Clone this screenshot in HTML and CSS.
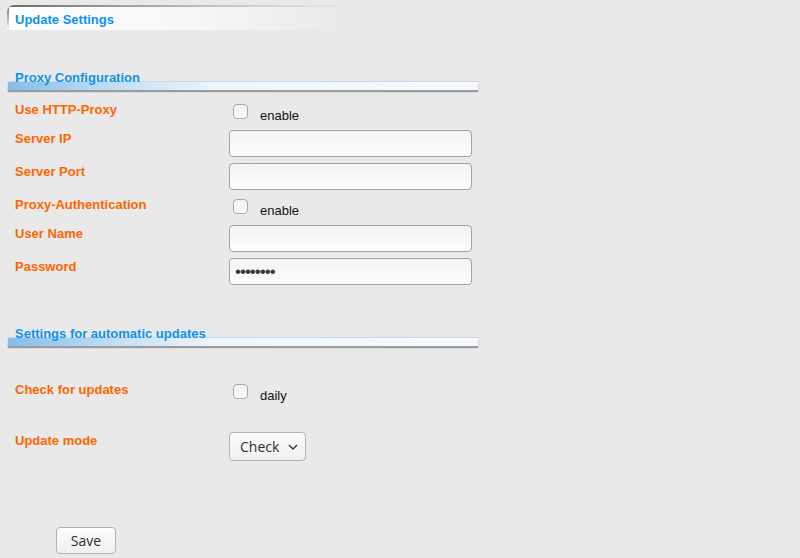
FILE: index.html
```html
<!DOCTYPE html>
<html>
<head>
<meta charset="utf-8">
<title>Update Settings</title>
<link rel="stylesheet" href="styles.css">
</head>
<body>
<div class="page">
  <div class="tab">Update Settings</div>

  <div class="section first">
    <div class="section-title">Proxy Configuration</div>
    <div class="section-bar"></div>
  </div>

  <div class="rows proxy">
    <div class="row check-row">
      <div class="label">Use HTTP-Proxy</div>
      <div class="value"><input type="checkbox" class="cb"><span class="cb-text">enable</span></div>
    </div>
    <div class="row input-row">
      <div class="label">Server IP</div>
      <div class="value"><input type="text" class="field"></div>
    </div>
    <div class="row input-row">
      <div class="label">Server Port</div>
      <div class="value"><input type="text" class="field"></div>
    </div>
    <div class="row check-row">
      <div class="label">Proxy-Authentication</div>
      <div class="value"><input type="checkbox" class="cb"><span class="cb-text">enable</span></div>
    </div>
    <div class="row input-row">
      <div class="label">User Name</div>
      <div class="value"><input type="text" class="field"></div>
    </div>
    <div class="row input-row">
      <div class="label">Password</div>
      <div class="value"><input type="password" class="field pw" value="password"></div>
    </div>
  </div>

  <div class="section second">
    <div class="section-title">Settings for automatic updates</div>
    <div class="section-bar"></div>
  </div>

  <div class="rows updates">
    <div class="row daily-row">
      <div class="label">Check for updates</div>
      <div class="value"><input type="checkbox" class="cb"><span class="cb-text">daily</span></div>
    </div>
    <div class="row mode-row">
      <div class="label">Update mode</div>
      <div class="value">
        <div class="select-wrap">
          <select class="select"><option>Check</option><option>Install</option></select>
          <svg class="chevron" width="10" height="6" viewBox="0 0 10 6"><path d="M1 1l4 4 4-4" fill="none" stroke="#333" stroke-width="1.4"/></svg>
        </div>
      </div>
    </div>
  </div>

  <div class="actions">
    <button class="btn" type="button">Save</button>
  </div>
</div>
</body>
</html>
```
FILE: styles.css
```css
html, body {
  margin: 0;
  padding: 0;
  background: #e9e9e9;
}
body {
  font-family: "Liberation Sans", Arial, sans-serif;
  font-size: 13px;
  color: #111;
}
.page {
  padding-top: 5px;
}
.tab {
  margin-left: 7px;
  width: 335px;
  height: 18px;
  padding: 7px 0 0 8px;
  line-height: 15px;
  font-weight: bold;
  color: #0d94f2;
  border-top-left-radius: 7px;
  background:
    linear-gradient(to right, #6a6a6a, #9a9a9a 30%, rgba(233,233,233,0) 100%) top left / 100% 2px no-repeat,
    linear-gradient(to bottom, #6a6a6a, #bdbdbd 60%, rgba(233,233,233,0)) top left / 2px 100% no-repeat,
    linear-gradient(to right, #ffffff 0%, #f7f7f7 50%, rgba(233,233,233,0) 100%);
}
.section-title {
  padding-left: 15px;
  line-height: 15px;
  font-weight: bold;
  color: #0d94f2;
  position: relative;
  z-index: 1;
}
.section.first {
  margin-top: 40px;
}
.section.second {
  margin-top: 35px;
}
.section-bar {
  margin: -4px 0 0 8px;
  width: 470px;
  height: 8px;
  border-top: 1px solid #cfd6dc;
  background: linear-gradient(to right, #84bde9 0%, #c8e2f6 25%, #eef6fd 45%, #f6faff 100%);
  box-shadow: 0 2px 1px #9c9c9c;
}
.rows.proxy {
  margin-top: 11px;
}
.rows.updates {
  margin-top: 35px;
}
.row {
  display: grid;
  grid-template-columns: 214px 1fr;
  padding-left: 15px;
}
.check-row { height: 29px; }
.input-row { height: 33px; }
.daily-row { height: 51px; }
.mode-row { height: 60px; }
.label {
  padding-top: 1px;
  line-height: 15px;
  font-weight: bold;
  color: #ff6600;
}
.value {
  display: flex;
  align-items: flex-start;
}
.cb {
  appearance: none;
  -webkit-appearance: none;
  width: 15px;
  height: 15px;
  margin: 3px 0 0 4px;
  border: 1px solid #a9a9a9;
  border-radius: 4px;
  background: linear-gradient(#f2f2f2, #fdfdfd);
  box-sizing: border-box;
}
.cb-text {
  margin-left: 12px;
  padding-top: 7px;
  line-height: 15px;
  color: #111;
}
.field {
  width: 243px;
  height: 27px;
  box-sizing: border-box;
  margin: 0;
  padding: 0 5px;
  border: 1px solid #a3a3a3;
  border-radius: 4px;
  background: linear-gradient(#f3f3f3, #fdfdfd);
  font-family: "Liberation Sans", Arial, sans-serif;
  font-size: 13px;
  color: #333;
}
.field.pw {
  font-size: 17px;
  color: #3a3a3a;
  letter-spacing: -1px;
}
.select-wrap {
  position: relative;
  width: 77px;
  height: 29px;
}
.select {
  appearance: none;
  -webkit-appearance: none;
  width: 77px;
  height: 29px;
  box-sizing: border-box;
  margin: 0;
  padding: 0 0 0 10px;
  border: 1px solid #b3b3b3;
  border-radius: 4px;
  background: linear-gradient(#fbfbfb, #f0f0f0);
  font-family: "Open Sans", sans-serif;
  font-size: 14px;
  color: #2e2e2e;
}
.chevron {
  position: absolute;
  left: 59px;
  top: 12px;
  pointer-events: none;
}
.actions {
  padding: 35px 0 0 56px;
}
.btn {
  width: 60px;
  height: 27px;
  box-sizing: border-box;
  margin: 0;
  padding: 0;
  border: 1px solid #b3b3b3;
  border-radius: 4px;
  background: linear-gradient(#fdfdfd, #efefef);
  font-family: "Open Sans", sans-serif;
  font-size: 14px;
  color: #2e2e2e;
}
```
